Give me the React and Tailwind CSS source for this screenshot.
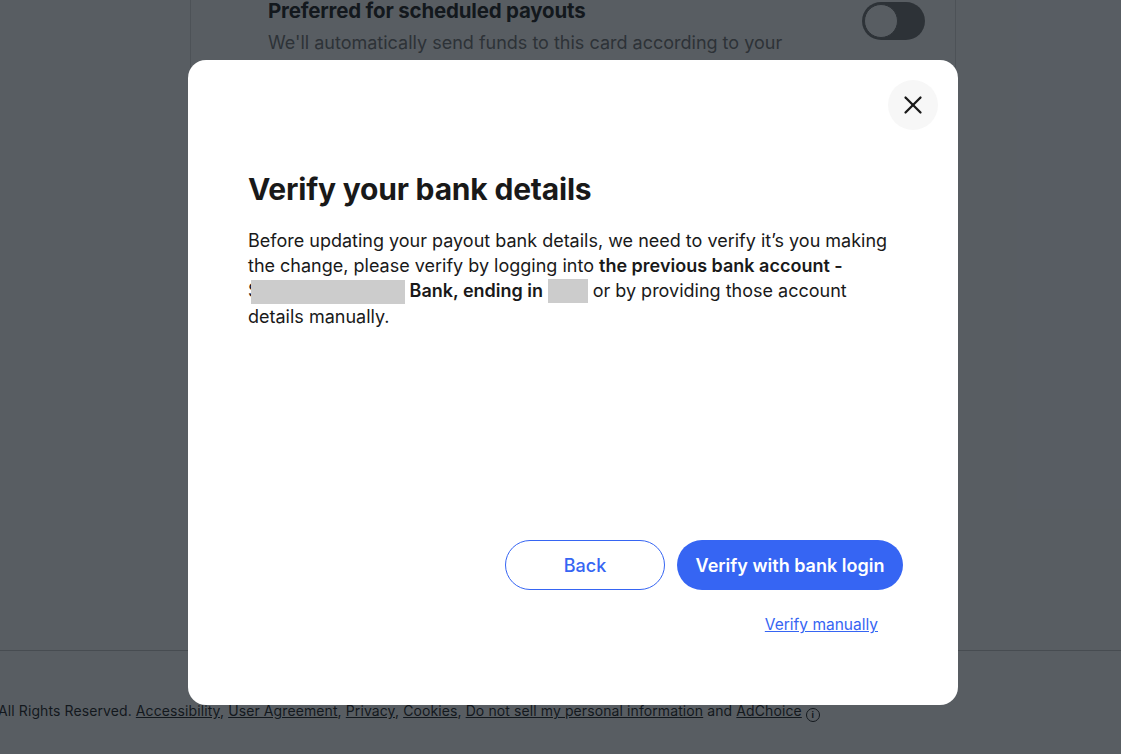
import { X } from 'lucide-react';

export default function App() {
  return (
    <div className="relative h-screen w-full overflow-hidden bg-white font-['Inter','Open_Sans',sans-serif] text-[#191919]">
      {/* page underneath */}
      <div className="flex h-full flex-col">
        <div className="h-[650px] shrink-0">
          <div className="ml-[190px] h-full w-[766px] border-x border-[#d9d9d9]">
            <div className="-mt-[3px] flex items-start justify-between pl-[77px] pr-[30px]">
              <div>
                <div className="text-[20.5px] font-bold leading-[28px] tracking-[-0.2px]">Preferred for scheduled payouts</div>
                <div className="mt-[5px] text-[18px] leading-[25px] text-[#707070]">We'll automatically send funds to this card according to your</div>
              </div>
              <div className="mt-[5px] flex h-[38px] w-[63px] items-center rounded-full bg-[#707070] px-[2px]">
                <div className="h-[34px] w-[34px] rounded-full border border-[#707070] bg-white" />
              </div>
            </div>
          </div>
        </div>
        <div className="flex-1 border-t border-[#c7c7c7]">
          <div className="mt-[50px] -ml-[2px] whitespace-nowrap text-[14px] leading-[20px] tracking-[0.1px] text-[#191919]">
            All Rights Reserved. <a className="underline">Accessibility</a>, <a className="underline">User Agreement</a>, <a className="underline">Privacy</a>, <a className="underline">Cookies</a>, <a className="underline">Do not sell my personal information</a> and <a className="underline">AdChoice</a>{' '}
            <span className="inline-flex h-[14px] w-[14px] items-center justify-center rounded-full border border-[#191919] align-[-2px] text-[9px] font-bold leading-none">i</span>
          </div>
        </div>
      </div>

      {/* overlay + dialog */}
      <div className="absolute inset-0 flex items-start justify-center bg-[#111820]/70 pl-[25px] pt-[60px]">
        <div className="flex h-[645px] w-[770px] flex-col rounded-[18px] bg-white p-[20px]">
          <div className="flex justify-end">
            <button className="flex h-[50px] w-[50px] items-center justify-center rounded-full bg-[#f7f7f7] text-[#191919]">
              <X size={30} strokeWidth={1.8} />
            </button>
          </div>
          <div className="flex-1 px-[40px] pt-[40px]">
            <h2 className="text-[30px] font-bold leading-[38px] tracking-[-0.2px]">Verify your bank details</h2>
            <p className="mt-[20px] w-[650px] text-[18px] leading-[25px]">
              Before updating your payout bank details, we need to verify it’s you making the change, please verify by logging into <b className="font-semibold">the previous bank account -</b>{' '}
              <span className="inline-flex w-[157px] items-start overflow-hidden align-top">
                <span className="w-[3px] shrink-0 overflow-hidden">S</span>
                <span className="mt-[2px] h-[24px] w-[154px] shrink-0 bg-[#cccccc]" />
              </span>
              <b className="font-semibold"> Bank, ending in </b>
              <span className="inline-block h-[24px] w-[40px] bg-[#cccccc] align-[-6px]" /> or by providing those account details manually.
            </p>
          </div>
          <div className="flex justify-end gap-[12px] pr-[35px]">
            <button className="h-[50px] w-[160px] rounded-full border border-[#3665f3] text-[18px] font-medium text-[#3665f3]">Back</button>
            <button className="h-[50px] w-[226px] rounded-full bg-[#3665f3] text-[18px] font-semibold text-white">Verify with bank login</button>
          </div>
          <div className="mt-[23px] flex justify-end pr-[60px]">
            <a className="text-[15.5px] leading-[24px] text-[#3665f3] underline">Verify manually</a>
          </div>
          <div className="h-[48px]" />
        </div>
      </div>
    </div>
  );
}
